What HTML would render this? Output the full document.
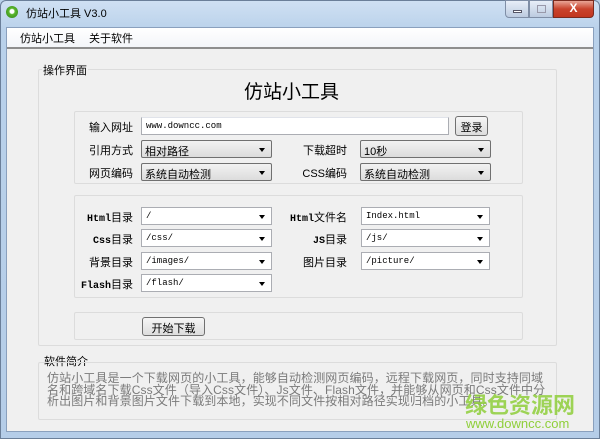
<!DOCTYPE html>
<html><head><meta charset="utf-8"><style>
*{margin:0;padding:0;box-sizing:border-box}
body{width:600px;height:439px;overflow:hidden;background:#b9d1ea;font-family:"Liberation Sans","Noto Sans CJK SC",sans-serif;font-size:11px;color:#000;position:relative}
.a{position:absolute;white-space:nowrap}
.frame{left:0;top:0;width:600px;height:439px;background:linear-gradient(#cfe0f3,#b9d1ea 30px,#b5cde8);border:1px solid #6b7f99;border-radius:6px 6px 0 0}
.client{left:6px;top:27px;width:588px;height:405px;background:#f0f0f0;border:1px solid #8aa0bd}
.menu{left:7px;top:28px;width:586px;height:21px;background:linear-gradient(#fff,#f3f5f9);border-bottom:2px solid #8e8e8e}
.gb{border:1px solid #dcdcdc;border-radius:2px}
.mono{font-family:"Liberation Mono","Noto Sans CJK SC",monospace;font-size:9px}
.lm{font-family:"Liberation Mono",monospace;font-size:10px;font-weight:bold}
.inp{background:#fff;border:1px solid #abadb3;border-top-color:#e0e3ea;height:18px;padding:3px 0 0 4px}
.sel{background:linear-gradient(#f2f2f2,#dcdcdc);border:1px solid #707070;border-radius:2px;height:18px;padding:2px 0 0 3px;font-size:11px}
.combo{background:#fff;border:1px solid #abadb3;height:18px;padding:3px 0 0 4px}
.arr{position:absolute;right:6px;top:7px;width:0;height:0;border-left:3.5px solid transparent;border-right:3.5px solid transparent;border-top:4px solid #000}
.lbl{text-align:right;width:90px;font-size:11px}
.btn{background:linear-gradient(#f6f6f6,#dddddd);border:1px solid #707070;border-radius:3px;text-align:center;font-size:11px;padding-top:2px}
</style></head><body>
<div class="a frame"></div>
<div class="a" style="left:6px;top:6px;width:12px;height:12px;border-radius:50%;background:radial-gradient(circle at 50% 45%,#fff 0 2px,#5cb82e 3px,#2f7f18)"></div>
<div class="a" style="left:26px;top:5px;font-size:11px">仿站小工具 V3.0</div>
<div class="a" style="left:505px;top:0;width:24px;height:18px;background:linear-gradient(#e7eef8,#bccbe0);border:1px solid #7f8ea6;border-radius:0 0 0 4px"><div style="position:absolute;left:7px;top:9px;width:9px;height:3px;background:#fff;border:1px solid #556"></div></div>
<div class="a" style="left:529px;top:0;width:24px;height:18px;background:linear-gradient(#e7eef8,#bccbe0);border:1px solid #7f8ea6"><div style="position:absolute;left:7px;top:4px;width:9px;height:8px;border:1px solid #99a"></div></div>
<div class="a" style="left:553px;top:0;width:41px;height:18px;background:linear-gradient(#e9a596,#c9432c 50%,#c2361f);border:1px solid #7a2a1e;border-radius:0 0 4px 0;color:#fff;font-weight:bold;text-align:center;font-size:12px;line-height:15px">X</div>
<div class="a client"></div>
<div class="a menu"></div>
<div class="a" style="left:20px;top:30px">仿站小工具</div>
<div class="a" style="left:89px;top:30px">关于软件</div>

<div class="a gb" style="left:38px;top:69px;width:519px;height:277px"></div>
<div class="a" style="left:42px;top:62px;background:#f0f0f0;padding:0 1px">操作界面</div>
<div class="a" style="left:0;top:77px;width:583px;text-align:center;font-size:19px">仿站小工具</div>

<div class="a gb" style="left:74px;top:111px;width:449px;height:73px"></div>
<div class="a lbl" style="left:43px;top:119px">输入网址</div>
<div class="a inp mono" style="left:141px;top:117px;width:308px">www.downcc.com</div>
<div class="a btn" style="left:455px;top:116px;width:33px;height:20px">登录</div>

<div class="a lbl" style="left:43px;top:142px">引用方式</div>
<div class="a sel" style="left:141px;top:140px;width:131px">相对路径<i class="arr"></i></div>
<div class="a lbl" style="left:257px;top:142px">下载超时</div>
<div class="a sel" style="left:360px;top:140px;width:131px">10秒<i class="arr"></i></div>
<div class="a lbl" style="left:43px;top:165px">网页编码</div>
<div class="a sel" style="left:141px;top:163px;width:131px">系统自动检测<i class="arr"></i></div>
<div class="a lbl" style="left:257px;top:165px">CSS编码</div>
<div class="a sel" style="left:360px;top:163px;width:131px">系统自动检测<i class="arr"></i></div>

<div class="a gb" style="left:74px;top:195px;width:449px;height:103px"></div>
<div class="a lbl" style="left:43px;top:209px"><span class="lm">Html</span>目录</div>
<div class="a combo mono" style="left:141px;top:207px;width:131px">/<i class="arr"></i></div>
<div class="a lbl" style="left:257px;top:209px"><span class="lm">Html</span>文件名</div>
<div class="a combo mono" style="left:361px;top:207px;width:129px">Index.html<i class="arr"></i></div>
<div class="a lbl" style="left:43px;top:231px"><span class="lm">Css</span>目录</div>
<div class="a combo mono" style="left:141px;top:229px;width:131px">/css/<i class="arr"></i></div>
<div class="a lbl" style="left:257px;top:231px"><span class="lm">JS</span>目录</div>
<div class="a combo mono" style="left:361px;top:229px;width:129px">/js/<i class="arr"></i></div>
<div class="a lbl" style="left:43px;top:254px">背景目录</div>
<div class="a combo mono" style="left:141px;top:252px;width:131px">/images/<i class="arr"></i></div>
<div class="a lbl" style="left:257px;top:254px">图片目录</div>
<div class="a combo mono" style="left:361px;top:252px;width:129px">/picture/<i class="arr"></i></div>
<div class="a lbl" style="left:43px;top:276px"><span class="lm">Flash</span>目录</div>
<div class="a combo mono" style="left:141px;top:274px;width:131px">/flash/<i class="arr"></i></div>

<div class="a gb" style="left:74px;top:312px;width:449px;height:28px"></div>
<div class="a btn" style="left:142px;top:317px;width:63px;height:19px">开始下载</div>

<div class="a" style="left:44px;top:353px">软件简介</div>
<div class="a gb" style="left:38px;top:362px;width:519px;height:58px"></div>
<div class="a" style="left:47px;top:373px;width:500px;white-space:normal;font-size:12px;line-height:11.5px;color:#7a7a7a;letter-spacing:0.1px">仿站小工具是一个下载网页的小工具，能够自动检测网页编码，远程下载网页，同时支持同域名和跨域名下载Css文件（导入Css文件）、Js文件、Flash文件，并能够从网页和Css文件中分析出图片和背景图片文件下载到本地，实现不同文件按相对路径实现归档的小工具。</div>
<div class="a" style="left:465px;top:388px;font-size:22px;color:#8fcf3a;font-weight:bold;opacity:.85">绿色资源网</div>
<div class="a" style="left:466px;top:416px;font-size:13px;color:#8fcf3a">www.downcc.com</div>
</body></html>
